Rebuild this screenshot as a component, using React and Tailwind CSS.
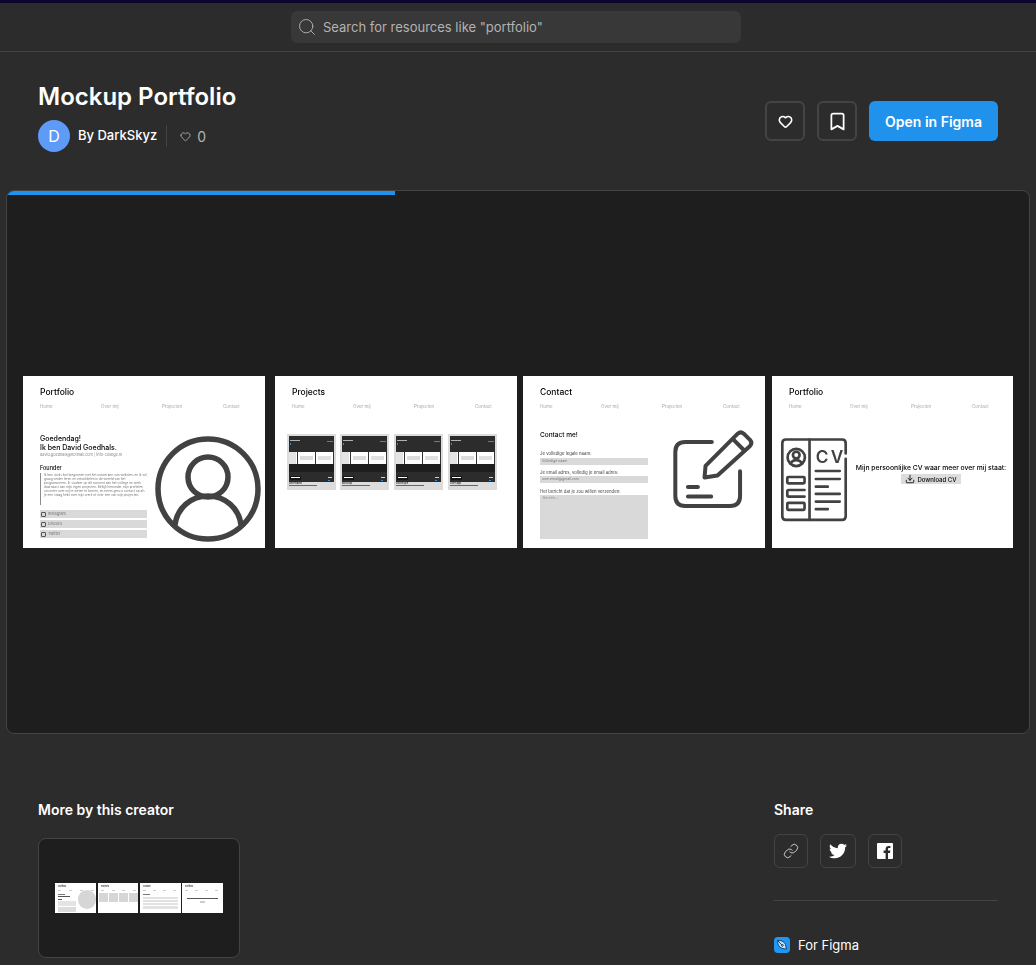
import { Search, Heart, Bookmark, Link, Download } from "lucide-react";
import { FaTwitter } from "react-icons/fa";

const navItems = ["Home", "Over mij", "Projecten", "Contact"];

function SlideHeader({ title }) {
  return (
    <div>
      <p className="text-[8.5px] leading-[10px] font-medium text-black">{title}</p>
      <div className="mt-[7px] grid grid-cols-[61px_61px_61px_40px] text-[4.5px] leading-[5px] text-[#a8a8a8]">
        {navItems.map((item) => (
          <span key={item}>{item}</span>
        ))}
      </div>
    </div>
  );
}

function UserCircle() {
  return (
    <svg viewBox="0 0 106 106" className="w-[106px] h-[106px] shrink-0" fill="none" stroke="#424242" strokeWidth="5.5">
      <circle cx="53" cy="53" r="50" />
      <circle cx="53" cy="41" r="20" />
      <path d="M20 89 C22 72 36 60 53 60 C70 60 84 72 86 89" />
    </svg>
  );
}

function PencilIcon() {
  return (
    <svg viewBox="450 170 260 250" className="w-[87px] h-[83px] shrink-0" fill="none" stroke="#424242" strokeWidth="12" strokeLinecap="round" strokeLinejoin="round">
      <path d="M575 215 H495 Q465 215 465 245 V378 Q465 408 495 408 H630 Q660 408 660 378 V303" />
      <path d="M503 351 H533 M503 379 H573" />
      <path d="M553 322 L556 287 L653 190 Q662 182 671 190 L690 209 Q698 218 690 227 L592 316 Z" />
      <path d="M640 208 L672 240" />
    </svg>
  );
}

function CvIcon() {
  return (
    <svg viewBox="30 195 220 270" className="w-[73px] h-[90px] shrink-0" fill="none" stroke="#424242" strokeWidth="8" strokeLinecap="round" strokeLinejoin="round">
      <path d="M234 250 V219 Q234 208 223 208 H54 Q43 208 43 219 V439 Q43 450 54 450 H223 Q234 450 234 439 V266" />
      <path d="M125 208 V450" />
      <circle cx="85" cy="262" r="26" />
      <circle cx="85" cy="255" r="10" />
      <path d="M68 281 Q72 270 85 270 Q98 270 102 281" />
      <rect x="58" y="321" width="52" height="19" rx="3" />
      <path d="M110 380 H62 Q58 380 58 376 V364 Q58 360 62 360 H110" />
      <rect x="58" y="399" width="52" height="21" rx="3" />
      <text x="144" y="278" fontFamily="Inter, sans-serif" fontSize="52" fontWeight="600" letterSpacing="7" fill="#424242" stroke="none">CV</text>
      <path d="M144 303 H216 M144 327 H216 M144 350 H180 M144 372 H216 M144 395 H216 M144 418 H180" />
    </svg>
  );
}

function ProjectThumb({ caption }) {
  return (
    <div className="w-[49px] h-[56px] bg-[#dcdcdc] px-[2px] pt-[2px] overflow-hidden">
      <div className="h-[16px] bg-[#2c2c2c] px-[1px] pt-[4px]">
        <div className="flex items-start justify-between">
          <div className="w-[10px] h-[1px] bg-[#b0b0b0]" />
          <div className="w-[6px] h-[1px] mt-[1px] bg-[#2092eb]" />
        </div>
        <div className="mt-[1px] w-[1px] h-[2px] bg-[#2092eb]" />
      </div>
      <div className="h-[12px] bg-white flex gap-[1px]">
        <div className="w-[7px] bg-[#e4e4e4]" />
        <div className="w-[1px] bg-[#333]" />
        <div className="w-[15px] flex flex-col gap-[1px] px-[1px] pt-[4px]">
          <div className="h-[4px] bg-[#dcdcdc]" />
        </div>
        <div className="w-[1px] bg-[#333]" />
        <div className="flex-1 flex flex-col gap-[1px] px-[1px] pt-[4px]">
          <div className="h-[4px] bg-[#e0e0e0]" />
        </div>
        <div className="w-[1px] bg-[#333]" />
      </div>
      <div className="h-[8px] bg-[#1e1e1e]" />
      <div className="h-[10px] bg-[#2c2c2c] px-[1px] pt-[4px] flex justify-between">
        <div className="w-[11px] h-[4px] bg-[#161616] pt-[1px] px-[1px]">
          <div className="h-[1px] bg-white" />
        </div>
        <div className="w-[5px] pt-[1px]">
          <div className="h-[1px] w-[4px] bg-[#cfcfcf]" />
          <div className="mt-[2px] h-[1px] w-[2px] bg-[#2092eb]" />
        </div>
      </div>
      <p className="text-[2.6px] leading-[3px] text-[#222] font-medium">{caption}</p>
      <div className="h-[1px] w-[28px] bg-[#666]" />
    </div>
  );
}

function SlideOne() {
  return (
    <div className="w-[242px] h-[172px] bg-white pl-[17px] pt-[11px] overflow-hidden blur-[0.35px]">
      <SlideHeader title="Portfolio" />
      <div className="flex">
        <div className="w-[107px] pt-[25px]">
          <p className="text-[7px] leading-[9px] font-medium text-black">Goedendag!<br />Ik ben David Goedhals.</p>
          <p className="text-[3.8px] leading-[5px] text-[#8a8a8a]">david.goedhals@hotmail.com | info-college.nl</p>
          <p className="mt-[8px] text-[5.5px] leading-[7px] font-medium text-black">Founder</p>
          <p className="border-l border-[#8c8c8c] pl-[3px] mt-[1px] text-[3.15px] leading-[4px] h-[32px] overflow-hidden text-[#777]">
            Ik ben sinds kort begonnen met het ontwerpen van websites en ik wil graag verder leren en ontwikkelen in de wereld van het programmeren. Ik studeer op dit moment aan het college en werk daarnaast aan mijn eigen projecten. Bekijk hieronder mijn profielen om meer over mij te weten te komen, en neem gerust contact op als je een vraag hebt over mijn werk of over een van mijn projecten.
          </p>
          <div className="mt-[5px] flex flex-col gap-[2px] text-[3.8px] leading-[8px] text-[#777]">
            {["Instagram", "Discord", "Twitter"].map((item) => (
              <div key={item} className="h-[8px] bg-[#d9d9d9] flex items-center gap-[2px] pl-[1px]">
                <span className="w-[5px] h-[5px] rounded-[1px] border-[0.5px] border-[#555]" />
                {item}
              </div>
            ))}
          </div>
        </div>
        <div className="pl-[8px] pt-[27px]">
          <UserCircle />
        </div>
      </div>
    </div>
  );
}

function SlideTwo() {
  return (
    <div className="w-[242px] h-[172px] bg-white pt-[11px] overflow-hidden blur-[0.35px]">
      <div className="pl-[17px]">
        <SlideHeader title="Projects" />
      </div>
      <div className="mt-[25px] pl-[12px] flex">
        <ProjectThumb caption="Wireframe" />
        <div className="ml-[4px]"><ProjectThumb caption="Mockup" /></div>
        <div className="ml-[5px]"><ProjectThumb caption="Prototype" /></div>
        <div className="ml-[5px]"><ProjectThumb caption="User app" /></div>
      </div>
    </div>
  );
}

function SlideThree() {
  return (
    <div className="w-[242px] h-[172px] bg-white pl-[17px] pt-[11px] overflow-hidden blur-[0.35px]">
      <SlideHeader title="Contact" />
      <div className="flex">
        <div className="w-[108px] pt-[22px]">
          <p className="text-[6.5px] leading-[8px] font-medium text-black">Contact me!</p>
          <p className="mt-[12px] text-[4.3px] leading-[5px] text-[#444]">Je volledige legale naam:</p>
          <div className="mt-[2px] h-[7px] bg-[#d9d9d9] pl-[2px] text-[3.5px] leading-[7px] text-[#777]">Volledige naam</div>
          <p className="mt-[5px] text-[4.3px] leading-[5px] text-[#444]">Je email adres, volledig je email adres:</p>
          <div className="mt-[1px] h-[7px] bg-[#d9d9d9] pl-[2px] text-[3.5px] leading-[7px] text-[#777]">uwe.email@gmail.com</div>
          <p className="mt-[6px] text-[4.3px] leading-[5px] text-[#444]">Het bericht dat je zou willen verzenden:</p>
          <div className="mt-[1px] h-[44px] bg-[#d9d9d9] pl-[3px] pt-[1px] text-[3.5px] leading-[5px] text-[#888]">Bericht...</div>
        </div>
        <div className="pl-[22px] pt-[18px]">
          <PencilIcon />
        </div>
      </div>
    </div>
  );
}

function SlideFour() {
  return (
    <div className="w-[241px] h-[172px] bg-white pt-[11px] overflow-hidden blur-[0.35px]">
      <div className="pl-[17px]">
        <SlideHeader title="Portfolio" />
      </div>
      <div className="mt-[26px] pl-[6px] flex items-start">
        <CvIcon />
        <div className="pt-[28px] w-[160px] flex flex-col items-center">
          <p className="text-[6.8px] leading-[9px] font-medium whitespace-nowrap text-black">Mijn persoonlijke CV waar meer over mij staat:</p>
          <div className="mt-[2px] h-[10px] w-[60px] bg-[#dcdcdc] flex items-center justify-center gap-[2px] text-[6px] font-medium text-black">
            <Download size={10} strokeWidth={2} />
            Download CV
          </div>
        </div>
      </div>
    </div>
  );
}

function MiniHeader({ title }) {
  return (
    <div>
      <p className="text-[2px] leading-[3px] font-medium text-black">{title}</p>
      <div className="mt-[2px] flex justify-between pr-[2px]">
        <div className="w-[3px] h-[1px] bg-[#ccc]" />
        <div className="w-[3px] h-[1px] bg-[#ccc]" />
        <div className="w-[3px] h-[1px] bg-[#ccc]" />
        <div className="w-[3px] h-[1px] bg-[#ccc]" />
      </div>
    </div>
  );
}

function MiniThumbs() {
  return (
    <div className="flex blur-[0.25px]">
      <div className="w-[41px] h-[30px] bg-white pl-[3px] pt-[2px] overflow-hidden">
        <MiniHeader title="Portfolio" />
        <div className="flex">
          <div className="w-[19px] pt-[3px]">
            <div className="h-[1px] w-[7px] bg-[#777]" />
            <div className="mt-[1px] h-[1px] w-[12px] bg-[#555]" />
            <div className="mt-[2px] h-[1px] w-[4px] bg-[#555]" />
            <div className="mt-[1px] h-[5px] bg-[#e4e4e4]" />
            <div className="mt-[1px] h-[5px] bg-[#dcdcdc]" />
          </div>
          <div className="ml-[2px] mt-[-1px] w-[18px] h-[19px] rounded-full bg-[#d6d6d6]" />
        </div>
      </div>
      <div className="ml-[2px] w-[40px] h-[30px] bg-white pl-[1px] pt-[2px] overflow-hidden">
        <div className="pl-[2px]"><MiniHeader title="Projects" /></div>
        <div className="mt-[2px] flex gap-[1px]">
          <div className="w-[9px] h-[9px] bg-[#d6d6d6]" />
          <div className="w-[9px] h-[9px] bg-[#d6d6d6]" />
          <div className="w-[9px] h-[9px] bg-[#d6d6d6]" />
          <div className="w-[9px] h-[9px] bg-[#d6d6d6]" />
        </div>
      </div>
      <div className="ml-[2px] w-[41px] h-[30px] bg-white pl-[3px] pr-[3px] pt-[2px] overflow-hidden">
        <MiniHeader title="Contact" />
        <div className="mt-[3px] h-[1px] w-[7px] bg-[#777]" />
        <div className="mt-[2px] h-[2px] bg-[#e2e2e2]" />
        <div className="mt-[1px] h-[2px] bg-[#e2e2e2]" />
        <div className="mt-[1px] h-[2px] bg-[#e2e2e2]" />
        <div className="mt-[1px] h-[3px] bg-[#e2e2e2]" />
      </div>
      <div className="ml-[1px] w-[41px] h-[30px] bg-white pl-[3px] pr-[3px] pt-[2px] overflow-hidden">
        <MiniHeader title="Portfolio" />
        <div className="mt-[7px] mx-[2px] h-[1px] bg-[#555]" />
        <div className="mt-[2px] mx-auto h-[2px] w-[5px] bg-[#ccc]" />
      </div>
    </div>
  );
}

export default function App() {
  return (
    <div className="h-[965px] overflow-hidden bg-[#2c2c2c] font-['Inter',sans-serif]">
      <div className="h-[3px] bg-[#0b0630]" />

      {/* Search bar */}
      <div className="h-[49px] border-b border-[#444] flex items-center justify-center pr-[4px]">
        <div className="w-[450px] h-[32px] rounded-md bg-[#383838] flex items-center pl-[6px] gap-[6px] text-[13px] text-[#b3b3b3]">
          <Search size={20} strokeWidth={1.1} />
          <span className="mt-[1px]">Search for resources like "portfolio"</span>
        </div>
      </div>

      {/* Title row */}
      <div className="px-[38px] pt-[29px] flex justify-between items-start">
        <div>
          <h1 className="text-[24px] leading-[32px] font-semibold text-white">Mockup Portfolio</h1>
          <div className="mt-[7px] flex items-center">
            <div className="w-[32px] h-[32px] rounded-full bg-[#5e9bf7] flex items-center justify-center text-[16px] text-white">D</div>
            <span className="ml-[8px] text-[13px] font-medium text-white">By DarkSkyz</span>
            <div className="ml-[9px] w-px h-[22px] bg-[#444]" />
            <Heart size={11} strokeWidth={1.5} className="ml-[13px] text-[#d0d0d0]" />
            <span className="ml-[6px] text-[14px] text-[#b3b3b3]">0</span>
          </div>
        </div>
        <div className="pt-[20px] flex">
          <button className="w-[40px] h-[40px] rounded-md border-2 border-[#444] flex items-center justify-center text-white">
            <Heart size={15} strokeWidth={2.5} />
          </button>
          <button className="ml-[12px] w-[40px] h-[40px] rounded-md border-2 border-[#444] flex items-center justify-center text-white">
            <Bookmark size={21} strokeWidth={2} />
          </button>
          <button className="ml-[12px] w-[129px] h-[40px] rounded-md bg-[#2092eb] text-[14px] font-semibold text-white">Open in Figma</button>
        </div>
      </div>

      {/* Preview */}
      <div className="relative mt-[38px] ml-[6px] w-[1024px] h-[544px] rounded-lg border border-[#444] bg-[#1e1e1e] overflow-hidden flex items-center pl-[16px]">
        <div className="absolute top-0 left-0 w-[388px] h-[4px] bg-[#2092eb]" />
        <SlideOne />
        <div className="ml-[10px]"><SlideTwo /></div>
        <div className="ml-[6px]"><SlideThree /></div>
        <div className="ml-[7px]"><SlideFour /></div>
      </div>

      {/* Bottom */}
      <div className="mt-[66px] px-[38px] flex justify-between">
        <div>
          <h2 className="text-[14px] leading-[20px] font-semibold text-white">More by this creator</h2>
          <div className="mt-[18px] w-[202px] h-[120px] rounded-lg border border-[#444] bg-[#1e1e1e] flex items-center pl-[16px]">
            <MiniThumbs />
          </div>
        </div>
        <div className="w-[224px]">
          <h2 className="text-[14px] leading-[20px] font-semibold text-white">Share</h2>
          <div className="mt-[14px] flex">
            <button className="w-[34px] h-[34px] rounded-md border border-[#444] flex items-center justify-center text-[#e6e6e6]">
              <Link size={16} strokeWidth={1.25} />
            </button>
            <button className="ml-[12px] w-[36px] h-[34px] rounded-md border border-[#444] flex items-center justify-center text-white">
              <FaTwitter size={18} />
            </button>
            <button className="ml-[12px] w-[34px] h-[34px] rounded-md border border-[#444] flex items-center justify-center text-white">
              <svg viewBox="0 0 16 16" className="w-[16px] h-[16px]" fill="currentColor">
                <path d="M1 0 H15 a1 1 0 0 1 1 1 V15 a1 1 0 0 1-1 1 H11 V10 h2 l.3-2.4 H11 V6.2 c0-.7.2-1.1 1.2-1.1 H13.4 V3 c-.2 0-1-.1-1.8-.1 -1.8 0-3 1.1-3 3 V7.6 H6.6 V10 H8.6 V16 H1 a1 1 0 0 1-1-1 V1 a1 1 0 0 1 1-1z" />
              </svg>
            </button>
          </div>
          <div className="mt-[32px] h-px bg-[#444]" />
          <div className="mt-[34px] flex items-center">
            <div className="w-[16px] h-[16px] rounded-[4px] bg-[#2196f3] flex items-center justify-center">
              <svg viewBox="0 0 16 16" className="w-[12px] h-[12px]" fill="#bfe0fa" stroke="#123a5c" strokeWidth="1.2" strokeLinejoin="round">
                <path d="M2 2 C6 1.5 11 3 12.5 7 L14 13.5 L8 12.5 C4 11 2 7 2 2 Z" />
                <path d="M2.5 2.5 L8 8" />
                <circle cx="8.5" cy="8.5" r="1.2" />
              </svg>
            </div>
            <span className="ml-[8px] text-[13px] leading-[20px] text-white">For Figma</span>
          </div>
        </div>
      </div>
    </div>
  );
}
